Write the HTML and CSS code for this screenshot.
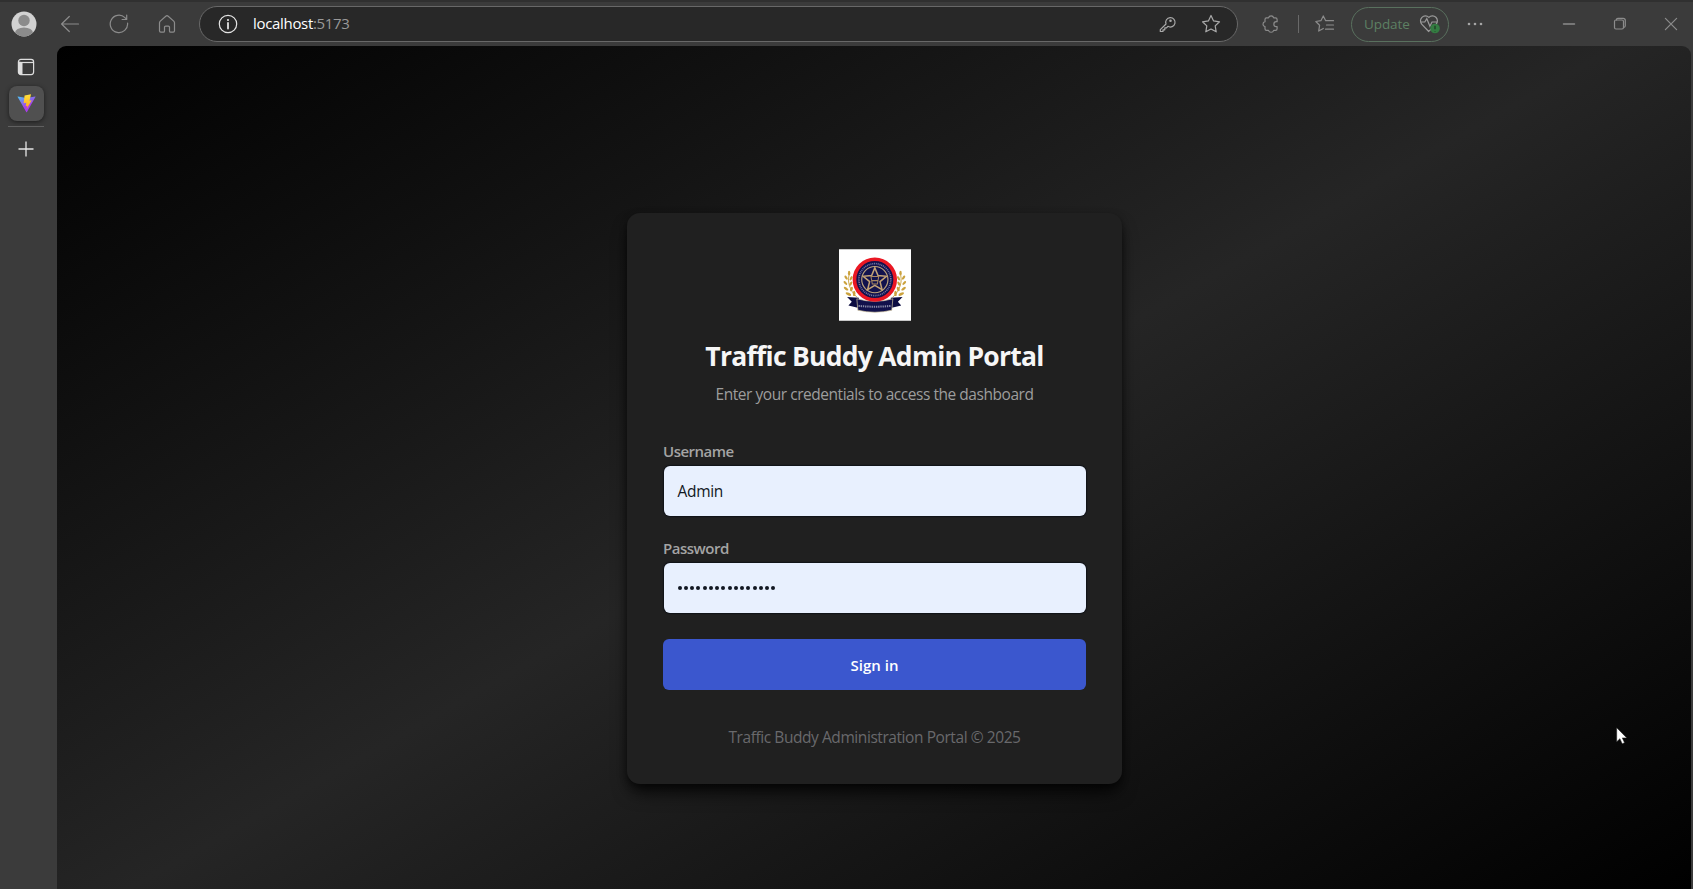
FILE: index.html
```html
<!DOCTYPE html>
<html lang="en">
<head>
<meta charset="utf-8">
<title>Traffic Buddy Admin Portal</title>
<link rel="stylesheet" href="styles.css">
</head>
<body>
<div class="browser">
  <header class="toolbar">
    <svg class="avatar" viewBox="0 0 26 26"><defs><clipPath id="face"><circle cx="13" cy="13" r="12.5"/></clipPath></defs><circle cx="13" cy="13" r="12.5" fill="#d2d2d2"/><g clip-path="url(#face)" fill="#8b8b8b"><circle cx="13" cy="9.5" r="5.7"/><ellipse cx="13" cy="22" rx="9" ry="5.5"/></g></svg>
    <nav class="nav">
      <svg class="ic" viewBox="0 0 20 20"><path d="M18.500 10H1.800M9.300 2.500 1.600 10l7.700 7.500"/></svg>
      <svg class="ic" viewBox="0 0 20 20"><path d="M18.600 9.200a8.700 8.700 0 1 1-2.700-5.600L17.600 5.400M17.700 1v4.500h-4.600"/></svg>
      <svg class="ic" viewBox="0 0 20 20"><path d="M2.500 8.800c0-.7.3-1.200.8-1.700l5.500-4.900c.7-.6 1.700-.6 2.400 0l5.500 4.900c.5.500.8 1 .8 1.700v8c0 .9-.5 1.400-1.300 1.400h-2.500c-.8 0-1.200-.5-1.200-1.300v-3.600c0-.8-.4-1.200-1.200-1.200H8.700c-.8 0-1.200.4-1.200 1.200v3.600c0 .8-.4 1.300-1.200 1.300H3.800c-.8 0-1.300-.5-1.300-1.400z"/></svg>
    </nav>
    <div class="address">
      <svg class="ic info" viewBox="0 0 20 20"><circle cx="10" cy="10" r="8.700"/><path d="M10 9v5.500" stroke-width="1.800"/><circle cx="10" cy="6" r=".5"/></svg>
      <span class="url"><span class="host">localhost</span><span class="port">:5173</span></span>
      <svg class="ic key" viewBox="0 0 20 20"><path d="m9 10-5.700 5.600v1.900H6v-1.700h1.800v-1.900h1.700l1.400-1.600a4.700 4.700 0 1 0-1.900-2.300z"/><circle cx="13.500" cy="6.800" r=".7"/></svg>
      <svg class="ic star" viewBox="0 0 20 20"><path d="m10 1.500 2.600 5.400 5.900.9-4.300 4.100 1 5.900-5.200-2.800-5.200 2.800 1-5.900-4.300-4.100 5.900-.9z"/></svg>
    </div>
    <div class="tools">
      <svg class="ic puzzle" viewBox="0 0 20 20"><path d="M4 5.500c0-1 .5-1.600 1.500-1.600h2a2.700 2.700 0 0 1 5.200 0h1.800c1 0 1.600.6 1.600 1.600v2.200h-.8a2.400 2.400 0 0 0 0 4.900h.8v2.100c0 1-.6 1.600-1.600 1.600h-1.800a2.700 2.700 0 0 1-5.200 0h-2c-1 0-1.500-.6-1.500-1.600v-2.100a2.500 2.500 0 0 1 0-4.900z"/></svg>
      <i class="bar"></i>
      <svg class="ic favs" viewBox="0 0 20 20"><path d="M10.700 6.700 8.300 1.900 5.900 6.700l-5.100.8 3.800 3.700-.9 5.900 4.600-2.600M10.700 6.700h7.800M11.500 11h7M10.500 15.200h8"/></svg>
      <div class="update"><span>Update</span><svg viewBox="0 0 22 22"><path class="heart" d="M9.700 18.500 2.900 11.300A4.700 4.700 0 0 1 9.900 4.400a4.700 4.700 0 0 1 7.100 6.900zM1.500 9h4.300l2-3.300 3.100 7.500L13 9h5.500"/><circle cx="16" cy="15.500" r="4.800" fill="#347c42"/><path d="M16 12.800v3.400M16 18v.4" stroke="#203b24" stroke-width="1.300"/></svg></div>
      <svg class="ic dots" viewBox="0 0 20 20"><g class="fill"><circle cx="4" cy="10" r="1.300"/><circle cx="10" cy="10" r="1.300"/><circle cx="16" cy="10" r="1.300"/></g></svg>
    </div>
    <div class="window">
      <svg class="ic" viewBox="0 0 20 20"><path d="M4.500 10h11" stroke-width="1.500"/></svg>
      <svg class="ic" viewBox="0 0 20 20"><rect x="4.500" y="6" width="9" height="9" rx="1.500"/><path d="M6.500 6V5.500q0-1.200 1.300-1.200h5.400q2.100 0 2.100 2.100v5.300q0 1.500-1.500 1.700"/></svg>
      <svg class="ic" viewBox="0 0 20 20"><path d="m4.400 4.400 11.200 11.200M15.600 4.400 4.400 15.600"/></svg>
    </div>
  </header>
  <div class="body">
    <aside class="tabs">
      <svg class="panel" viewBox="0 0 18 18"><rect x="1.400" y="1.400" width="15.200" height="15.200" rx="2.500" fill="none" stroke="#dedede" stroke-width="1.200"/><path d="M1.500 3.500v11q0 2 2 2h2V4.300z" fill="#dedede"/><path d="M2 4.500h14.500" stroke="#dedede" stroke-width="1.200"/></svg>
      <div class="tab"><svg viewBox="0 0 20 20"><defs><linearGradient id="v" x1="0" y1="0" x2=".6" y2="1"><stop stop-color="#4bc4f5"/><stop offset=".7" stop-color="#a93de9"/></linearGradient><linearGradient id="b" x1="0" y1="0" x2="0" y2="1"><stop stop-color="#ffe03a"/><stop offset="1" stop-color="#ffa61d"/></linearGradient></defs><path d="M.8 2.500 10 4.100l9.200-1.600q.5 0 .3.500l-9 16q-.4.600-.8 0L.6 3z" fill="url(#v)"/><path d="m14.800.3-6.800 1.200-1 8.300 2.800-.5-.7 3.600 1.900-.5-1 3.700L15.500 6.500l-2.400.5z" fill="url(#b)"/></svg></div>
      <i class="rule"></i>
      <svg class="plus" viewBox="0 0 18 18"><path d="M9 1.500v15M1.500 9h15" stroke="#e6e6e6" stroke-width="1.300"/></svg>
    </aside>
    <main class="page">
      <form class="card">
        <svg class="logo" viewBox="56 43 214 212">
          <path fill="#fff" d="M56 43h214v212H56z"/>
          <g id="laurel">
            <path d="M88 112c-9 24-2 52 22 74" fill="none" stroke="#c59a31" stroke-width="2.500"/>
            <g fill="#cba23d"><ellipse cx="86" cy="114" rx="3.500" ry="7"/><ellipse cx="77" cy="127" rx="3.500" ry="7" transform="rotate(-35 77 127)"/><ellipse cx="92" cy="129" rx="3.500" ry="7" transform="rotate(30 92 129)"/><ellipse cx="75" cy="143" rx="3.500" ry="7" transform="rotate(-45 75 143)"/><ellipse cx="91" cy="145" rx="3.500" ry="7" transform="rotate(30 91 145)"/><ellipse cx="77" cy="160" rx="3.500" ry="8" transform="rotate(-55 77 160)"/><ellipse cx="93" cy="161" rx="4" ry="7" transform="rotate(20 93 161)"/><ellipse cx="84" cy="176" rx="4" ry="9" transform="rotate(-65 84 176)"/><ellipse cx="101" cy="174" rx="4" ry="8"/></g>
          </g>
          <use href="#laurel" transform="matrix(-1 0 0 1 325 0)"/>
          <path d="m80 185 35 2v30l-31-7 10-11zM245 185l-35 2v30l31-7-10-11z" fill="#0c0c42"/>
          <path d="M109 190q54 15 107 0l-3 34q-50 12-101 0z" fill="#11114b" stroke="#d6c9a3" stroke-width="2"/>
          <path d="M114 211q48 5 97 0" fill="none" stroke="#8789a7" stroke-width="6" stroke-dasharray="4 2.500"/>
          <circle cx="162.500" cy="133" r="60.500" fill="#12124d" stroke="#ea1723" stroke-width="11"/>
          <circle cx="162.500" cy="133" r="39" fill="none" stroke="#bba27b" stroke-width="3.500"/>
          <circle cx="162.500" cy="133" r="47.500" fill="none" stroke="#7477a3" stroke-width="5" stroke-dasharray="3 2.500"/>
          <path d="m162.500 98 9.500 23 25 2-19 16 6 24-21.500-13-21.500 13 6-24-19-16 25-2z" fill="#12124d" stroke="#c3a276" stroke-width="4.500"/>
          <path d="m151 124 23 0-4 22h-15zM153 136h19" fill="none" stroke="#a88763" stroke-width="3"/>
        </svg>
        <h1>Traffic Buddy Admin Portal</h1>
        <p class="lead">Enter your credentials to access the dashboard</p>
        <label class="user-label">Username</label>
        <div class="field">Admin</div>
        <label class="pass-label">Password</label>
        <div class="field"><span class="mask"><i></i><i></i><i></i><i></i><i></i><i></i><i></i><i></i><i></i><i></i><i></i><i></i><i></i><i></i><i></i><i></i></span></div>
        <button type="button">Sign in</button>
        <p class="foot">Traffic Buddy Administration Portal © 2025</p>
      </form>
    </main>
  </div>
  <svg class="cursor" viewBox="0 0 12 18"><path d="M.7.700v14l3.200-3 2.300 5 2.300-1-2.200-4.800h4.500z" fill="#fff" stroke="#222" stroke-width=".5"/></svg>
</div>
</body>
</html>
```
FILE: styles.css
```css
* { box-sizing: border-box; }
body { margin: 0; font-family: "Open Sans", "Noto Sans", sans-serif; background: #3b3b3b; overflow: hidden; }
h1, p { margin: 0; }
svg { display: block; flex: none; }

.browser { height: 889px; display: flex; flex-direction: column; position: relative; }
.toolbar { height: 46px; border-top: 2px solid #303030; display: flex; align-items: center; padding: 0 12px 0 11px; flex: none; }
.avatar { width: 26px; height: 26px; }
.ic { width: 20px; height: 20px; fill: none; stroke: #8c8c8c; stroke-width: 1.200; stroke-linejoin: round; stroke-linecap: round; }
.fill { fill: #a5a5a5; stroke: none; }
.nav { display: flex; gap: 28.500px; margin-left: 23px; }

.address { width: 1039px; height: 35.500px; margin-left: 22px; border: 1.500px solid #686868; border-radius: 18px; background: #282828; display: flex; align-items: center; padding: 0 16px 0 17.500px; }
.info { stroke: #e4e4e4; }
.url { margin-left: 15.500px; font-size: 15px; line-height: 20px; flex: 1; letter-spacing: -.32px; position: relative; top: -1px; }
.host { color: #fff; }
.port { color: #999; }
.key { stroke: #aaa; }
.star { stroke: #aaa; margin-left: 24px; }

.tools { display: flex; align-items: center; margin-left: 23px; }
.bar { width: 1px; height: 18px; background: #696969; margin-left: 16.500px; }
.favs { margin-left: 16px; }
.update { width: 98px; height: 35px; margin-left: 16.500px; border: 1.500px solid #59705e; border-radius: 18px; display: flex; align-items: center; padding-left: 12px; color: #5d8063; font-size: 13.500px; line-height: 20px; letter-spacing: -.1px; }
.update span { margin-top: -1px; }
.update svg { width: 22px; height: 22px; margin-left: 9px; }
.heart { fill: none; stroke: #9b9b9b; stroke-width: 1.200; }
.dots { margin-left: 16px; }
.window { display: flex; gap: 31px; margin-left: auto; }

.body { flex: 1; display: flex; padding-right: 2px; min-height: 0; }
.tabs { width: 57px; display: flex; flex-direction: column; align-items: center; padding: 11.500px 5px 0 0; flex: none; }
.panel { width: 18px; height: 18px; }
.tab { width: 35px; height: 35px; margin-top: 10.500px; border-radius: 8px; background: #505050; box-shadow: 0 1px 4px #1d1d1d; display: grid; place-items: center; }
.tab svg { width: 19px; height: 19px; }
.rule { width: 36px; height: 1px; margin-top: 5px; background: #606060; }
.plus { width: 18px; height: 18px; margin-top: 13px; }

.page { flex: 1; border-radius: 9px 9px 0 0; background: linear-gradient(150.500deg, #000, #252525 50%, #000); display: flex; justify-content: center; align-items: flex-start; padding: 167px 0 0 1px; }
.card { width: 495px; height: 571px; padding: 36px; border-radius: 13px; background: #202020; box-shadow: 0 11px 17px -3px rgba(0,0,0,.75), 0 3px 7px rgba(0,0,0,.45); display: flex; flex-direction: column; }
.logo { width: 72px; height: 72px; align-self: center; }
h1 { margin-top: 17px; font-size: 26.500px; line-height: 36px; font-weight: 700; text-align: center; color: #f6f6f6; letter-spacing: -.73px; white-space: nowrap; }
.lead { margin-top: 9px; font-size: 15.500px; line-height: 22px; text-align: center; color: #9d9d9d; letter-spacing: -.46px; white-space: nowrap; }
label { font-size: 15px; line-height: 22px; font-weight: 600; color: #a4a4a4; letter-spacing: -.5px; }
.user-label { margin-top: 35px; }
.pass-label { margin-top: 21px; }
.field { height: 50px; margin: 4px .500px 0; border-radius: 6px; background: #e8f0fe; padding: 0 14px; display: flex; align-items: center; color: #111722; font-size: 15.500px; letter-spacing: -.3px; box-shadow: 0 0 1px 1px #101318; }
.mask { display: flex; gap: 2.250px; }
.mask i { width: 4px; height: 4px; border-radius: 50%; background: #111722; }
button { height: 51px; margin-top: 26px; padding: 0; border: 0; border-radius: 6px; background: #3b57ce; color: #fff; font: 600 15px/22px "Open Sans", sans-serif; flex: none; }
.foot { margin-top: 36px; font-size: 15.500px; line-height: 22px; text-align: center; color: #69696c; letter-spacing: -.43px; white-space: nowrap; }

.cursor { position: absolute; left: 1616px; top: 727px; width: 12px; height: 18px; }
```
